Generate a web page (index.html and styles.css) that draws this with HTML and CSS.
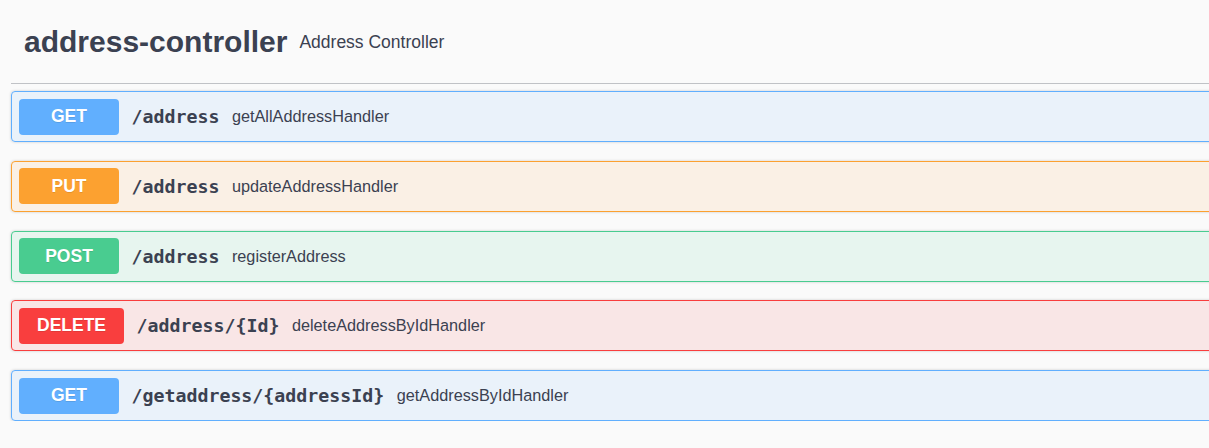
FILE: index.html
```html
<!DOCTYPE html>
<html>
<head>
<meta charset="utf-8">
<link rel="stylesheet" href="styles.css">
</head>
<body>
<div class="section">
  <div class="tag">
    <h3 class="tag-title">address-controller</h3>
    <span class="tag-desc">Address Controller</span>
  </div>
  <div class="ops">
    <div class="op op-get">
      <span class="method">GET</span>
      <span class="path">/address</span>
      <span class="desc">getAllAddressHandler</span>
    </div>
    <div class="op op-put">
      <span class="method">PUT</span>
      <span class="path">/address</span>
      <span class="desc">updateAddressHandler</span>
    </div>
    <div class="op op-post">
      <span class="method">POST</span>
      <span class="path">/address</span>
      <span class="desc">registerAddress</span>
    </div>
    <div class="op op-delete">
      <span class="method">DELETE</span>
      <span class="path">/address/{Id}</span>
      <span class="desc">deleteAddressByIdHandler</span>
    </div>
    <div class="op op-get">
      <span class="method">GET</span>
      <span class="path">/getaddress/{addressId}</span>
      <span class="desc">getAddressByIdHandler</span>
    </div>
  </div>
</div>
</body>
</html>
```

FILE: styles.css
```css
html, body {
  margin: 0;
  padding: 0;
  background: #fafafa;
  overflow: hidden;
}
body {
  font-family: "Liberation Sans", Arial, sans-serif;
  color: #3b4151;
}
.section {
  width: 1240px;
  padding-left: 11px;
}
.tag {
  display: flex;
  align-items: center;
  height: 83px;
  padding: 0 20px 0 13px;
  border-bottom: 1px solid rgba(59, 65, 81, 0.3);
  margin-bottom: 7px;
}
.tag-title {
  margin: 0;
  font-size: 30px;
  font-weight: bold;
  color: #3b4151;
}
.tag-desc {
  font-size: 17.5px;
  margin-left: 12px;
  padding-top: 1px;
}
.ops {
  display: flex;
  flex-direction: column;
  gap: 18.75px;
}
.op {
  display: flex;
  align-items: center;
  height: 51px;
  box-sizing: border-box;
  padding: 0 7px;
  border: 1px solid;
  border-radius: 4px;
  box-shadow: 0 0 3px rgba(0, 0, 0, 0.19);
}
.method {
  min-width: 100px;
  height: 36px;
  box-sizing: border-box;
  padding: 0 18px;
  display: flex;
  align-items: center;
  justify-content: center;
  border-radius: 4px;
  color: #fff;
  font-size: 17.5px;
  font-weight: bold;
  text-shadow: 0 1px 0 rgba(0, 0, 0, 0.1);
}
.path {
  font-family: "DejaVu Sans Mono", monospace;
  font-weight: bold;
  font-size: 18.25px;
  padding: 0 12.5px;
  color: #3b4151;
}
.desc {
  font-size: 16.25px;
  color: #3b4151;
}
.op-get { background: rgba(97, 175, 254, 0.1); border-color: #61affe; }
.op-get .method { background: #61affe; }
.op-put { background: rgba(252, 161, 48, 0.1); border-color: #fca130; }
.op-put .method { background: #fca130; }
.op-post { background: rgba(73, 204, 144, 0.1); border-color: #49cc90; }
.op-post .method { background: #49cc90; }
.op-delete { background: rgba(249, 62, 62, 0.1); border-color: #f93e3e; }
.op-delete .method { background: #f93e3e; }
```
